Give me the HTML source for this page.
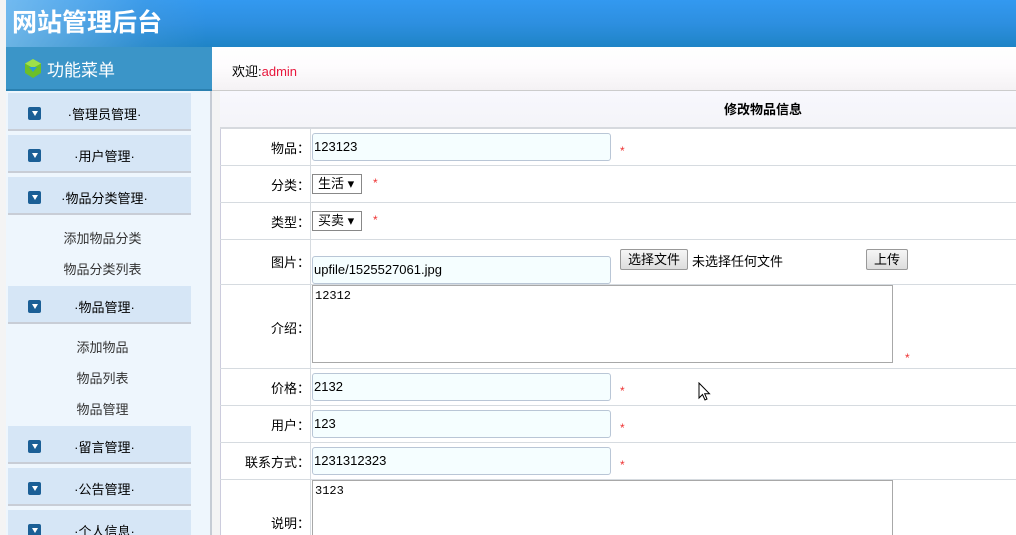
<!DOCTYPE html>
<html style="overflow:hidden;width:1016px;height:535px"><head><meta charset="utf-8"><style>
*{margin:0;padding:0;box-sizing:border-box}
body{width:1016px;height:535px;overflow:hidden;background:#f4f4f4;font-family:"Liberation Sans","Noto Sans CJK SC",sans-serif;font-size:13px;color:#000;position:relative}
.abs{position:absolute}
#hd{left:6px;top:0;width:1010px;height:47px;background:linear-gradient(#3399f0,#2d8fe0 50%,#1f84c6)}
#hdl{left:6px;top:0;width:200px;height:47px;background:linear-gradient(90deg,rgba(140,200,240,.7),rgba(80,160,220,.3) 70%,rgba(0,0,0,0))}
#title{left:12px;top:6px;color:#fff;font-size:25px;line-height:34px;font-weight:bold}
#mt{left:6px;top:47px;width:206px;height:44px;background:#3b95c8;border-bottom:2px solid #2a80b0}
#mt span{position:absolute;left:41px;top:9px;color:#fff;font-size:17px}
#side{left:6px;top:91px;width:206px;height:444px;background:#eef6fd;border-right:2px solid #c6ccd4;overflow:hidden}
.mi{position:absolute;left:2px;width:183px;height:38px;background:#d6e6f6;border-bottom:2px solid #c8cdd6}
.mi i{position:absolute;left:20px;top:14px;width:13px;height:13px;background:#1b5f96;border-radius:2px}
.mi i:after{content:"";position:absolute;left:4px;top:4px;border-left:3px solid transparent;border-right:3px solid transparent;border-top:5px solid #fff}
.mi span{position:absolute;left:0;width:183px;top:11px;text-align:center;font-size:13px;padding-left:10px}
.sub{position:absolute;left:2px;width:183px;text-align:center;color:#333;padding-left:6px}
#wb{left:212px;top:47px;width:804px;height:44px;background:linear-gradient(#fff,#fdfbfd 50%,#f4f2f4);border-bottom:1px solid #ccc}
#wb span{position:absolute;left:20px;top:14px}
#main{left:220px;top:91px;width:796px;height:444px;background:#fff;border-left:1px solid #ccd}
#th{left:220px;top:91px;width:796px;height:38px;background:linear-gradient(#f8f8fe,#f4f4f8);border-bottom:2px solid #d6d9de;text-align:center;font-weight:bold;line-height:38px;padding-left:290px}
.row{position:absolute;left:220px;width:796px;border-bottom:1px solid #d6dbe0;overflow:hidden}
.lab{position:absolute;left:0;width:91px;text-align:right;height:100%;border-right:1px solid #d6dbe0}
.lab span{position:absolute;right:0;font-size:13px}
.inp{position:absolute;left:92px;width:299px;height:28px;background:#f5feff;border:1px solid #b9c6d6;border-radius:3px;font-size:13px;line-height:26px;padding-left:1px}
.star{position:absolute;color:#e33;font-size:12px}
.sel{position:absolute;left:92px;width:50px;height:20px;border:1px solid #888;background:#fff;font-size:13px;line-height:18px;padding-left:5px}
.ta{position:absolute;left:92px;width:581px;border:1px solid #a8a8a8;background:#fff;font-family:"Liberation Mono","Noto Sans CJK SC",monospace;font-size:12px;padding:3px 0 0 2px}
.btn{position:absolute;height:21px;border:1px solid #999;border-radius:2px;background:linear-gradient(#f6f6f6,#ddd);text-align:center;line-height:19px}
</style></head><body>
<div id="hd" class="abs"></div><div id="hdl" class="abs"></div>
<div id="title" class="abs">网站管理后台</div>
<div id="mt" class="abs"><svg style="position:absolute;left:18px;top:12px" width="18" height="19" viewBox="0 0 18 19"><polygon points="9,0 17,4.5 17,14 9,19 1,14 1,4.5" fill="#6cbf2a"/><polygon points="9,0 17,4.5 9,9 1,4.5" fill="#9ee04a"/><polygon points="5,8 13,8 9,13" fill="#2a9ad8"/></svg><span>功能菜单</span></div>
<div id="side" class="abs">
<div class="mi" style="top:2px"><i></i><span>·管理员管理·</span></div>
<div class="mi" style="top:44px"><i></i><span>·用户管理·</span></div>
<div class="mi" style="top:86px"><i></i><span>·物品分类管理·</span></div>
<div class="sub" style="top:137px">添加物品分类</div>
<div class="sub" style="top:168px">物品分类列表</div>
<div class="mi" style="top:195px"><i></i><span>·物品管理·</span></div>
<div class="sub" style="top:246px">添加物品</div>
<div class="sub" style="top:277px">物品列表</div>
<div class="sub" style="top:308px">物品管理</div>
<div class="mi" style="top:335px"><i></i><span>·留言管理·</span></div>
<div class="mi" style="top:377px"><i></i><span>·公告管理·</span></div>
<div class="mi" style="top:419px"><i></i><span>·个人信息·</span></div>
</div>
<div id="wb" class="abs"><span>欢迎:<b style="font-weight:normal;color:#e8173c">admin</b></span></div>
<div id="main" class="abs"></div>
<div id="th" class="abs">修改物品信息</div>
<div class="row" style="top:129px;height:37px"><div class="lab"><span style="top:9px">物品：</span></div><div class="inp" style="top:4px">123123</div><div class="star" style="left:400px;top:15px">*</div></div>
<div class="row" style="top:166px;height:37px"><div class="lab"><span style="top:9px">分类：</span></div><div class="sel" style="top:8px">生活 ▾</div><div class="star" style="left:153px;top:10px">*</div></div>
<div class="row" style="top:203px;height:37px"><div class="lab"><span style="top:9px">类型：</span></div><div class="sel" style="top:8px">买卖 ▾</div><div class="star" style="left:153px;top:10px">*</div></div>
<div class="row" style="top:240px;height:45px"><div class="lab"><span style="top:12px">图片：</span></div><div class="inp" style="top:16px">upfile/1525527061.jpg</div><div class="btn" style="left:400px;top:9px;width:68px">选择文件</div><div class="abs" style="left:472px;top:11px">未选择任何文件</div><div class="btn" style="left:646px;top:9px;width:42px">上传</div></div>
<div class="row" style="top:285px;height:84px"><div class="lab"><span style="top:33px">介绍：</span></div><div class="ta" style="top:0;height:78px">12312</div><div class="star" style="left:685px;top:66px">*</div></div>
<div class="row" style="top:369px;height:37px"><div class="lab"><span style="top:9px">价格：</span></div><div class="inp" style="top:4px">2132</div><div class="star" style="left:400px;top:15px">*</div></div>
<div class="row" style="top:406px;height:37px"><div class="lab"><span style="top:9px">用户：</span></div><div class="inp" style="top:4px">123</div><div class="star" style="left:400px;top:15px">*</div></div>
<div class="row" style="top:443px;height:37px"><div class="lab"><span style="top:9px">联系方式：</span></div><div class="inp" style="top:4px">1231312323</div><div class="star" style="left:400px;top:15px">*</div></div>
<div class="row" style="top:480px;height:55px;border:none"><div class="lab"><span style="top:33px">说明：</span></div><div class="ta" style="top:0;height:70px">3123</div></div>
<svg class="abs" style="left:698px;top:382px" width="13" height="20" viewBox="0 0 13 20"><path d="M1 1 L1 16 L4.5 12.5 L7 18 L9 17 L6.7 11.8 L11.5 11.8 Z" fill="#fff" stroke="#000" stroke-width="1"/></svg>
</body></html>
